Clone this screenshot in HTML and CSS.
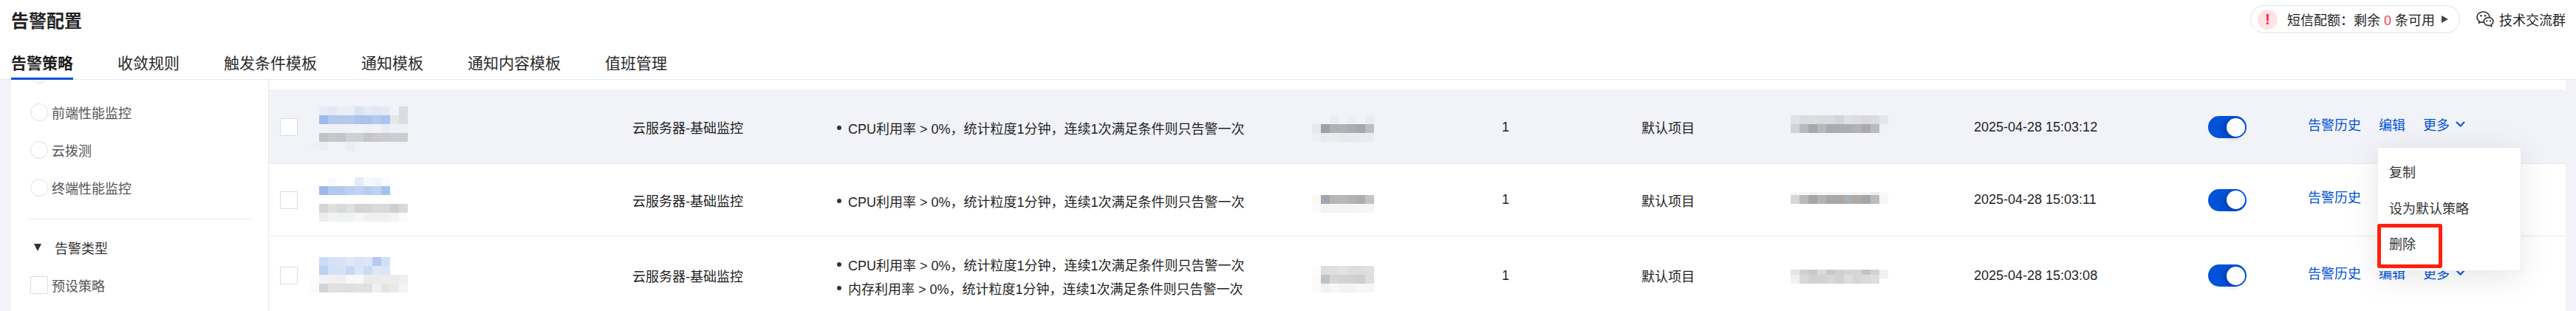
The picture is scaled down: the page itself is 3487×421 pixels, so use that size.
FILE: index.html
```html
<!DOCTYPE html>
<html lang="zh-CN">
<head>
  <meta charset="UTF-8">
  <title>告警配置</title>
  <link rel="stylesheet" href="styles.css">
</head>
<body>
  <header class="page-header">
    <div class="top-row">
      <h1>告警配置</h1>
      <div class="top-tools">
        <div class="quota-pill">
          <span class="quota-alert">!</span>
          <span>短信配额：剩余 <em>0</em> 条可用</span>
          <span class="quota-arrow"></span>
        </div>
        <a class="group-link">
          <svg class="wechat-icon" viewBox="0 0 24 22" width="24" height="22">
            <path d="M9.5 1C4.8 1 1 4.2 1 8.2c0 2.3 1.3 4.3 3.2 5.6l-.7 2.4 2.8-1.4c1 .3 2.1.5 3.2.5 4.7 0 8.5-3.2 8.5-7.1S14.2 1 9.5 1z" fill="#fff" stroke="#333" stroke-width="1.6" stroke-linejoin="round"/>
            <path d="M16.6 8.6c-3.5 0-6.4 2.5-6.4 5.5s2.9 5.5 6.4 5.5c.7 0 1.4-.1 2-.3l2.3 1.6-.5-2.6c1.6-1 2.6-2.5 2.6-4.2 0-3-2.9-5.5-6.4-5.5z" fill="#fff" stroke="#333" stroke-width="1.6" stroke-linejoin="round"/>
            <circle cx="6.4" cy="6.2" r="1.3" fill="#333"/>
            <circle cx="12" cy="6.2" r="1.3" fill="#333"/>
            <circle cx="14.2" cy="13.4" r="1.1" fill="#333"/>
            <circle cx="19" cy="13.4" r="1.1" fill="#333"/>
          </svg>
          <span>技术交流群</span>
        </a>
      </div>
    </div>
    <nav class="tabs">
      <a class="tab active">告警策略</a>
      <a class="tab">收敛规则</a>
      <a class="tab">触发条件模板</a>
      <a class="tab">通知模板</a>
      <a class="tab">通知内容模板</a>
      <a class="tab">值班管理</a>
    </nav>
  </header>

  <main class="content">
    <aside class="sidebar">
      <div class="radio-row"><span class="radio"></span></div>
      <div class="radio-row"><span class="radio"></span><span>前端性能监控</span></div>
      <div class="radio-row"><span class="radio"></span><span>云拨测</span></div>
      <div class="radio-row"><span class="radio"></span><span>终端性能监控</span></div>
      <hr class="side-divider">
      <div class="filter-title"><span class="caret"></span><span>告警类型</span></div>
      <div class="radio-row check-row"><span class="checkbox"></span><span>预设策略</span></div>
    </aside>

    <section class="table">
      <div class="table-top"></div>

      <div class="row hover">
        <div class="cell"><span class="checkbox"></span></div>
        <div class="cell">
          <svg class="mosaic">
            <g transform="translate(0,21)"><rect x="0" fill="#e6ebf6"/><rect x="12" fill="#e4e8f4"/><rect x="24" fill="#ebeef7"/><rect x="36" fill="#ebeef7"/><rect x="48" fill="#dce2f2"/><rect x="60" fill="#e6eaf6"/><rect x="72" fill="#e3e7f3"/><rect x="84" fill="#e5ebf6"/><rect x="108" fill="#dcdde2"/></g>
            <g transform="translate(0,33)"><rect x="0" fill="#9dbceb"/><rect x="12" fill="#b2c8ee"/><rect x="24" fill="#b5c8ee"/><rect x="36" fill="#b5caec"/><rect x="48" fill="#acc2ec"/><rect x="60" fill="#a8c5ec"/><rect x="72" fill="#b5c8ee"/><rect x="84" fill="#a9c4ee"/><rect x="96" fill="#e5e6ea"/><rect x="108" fill="#dbdce0"/></g>
            <g transform="translate(0,45)"><rect x="12" fill="#f0f1f6"/><rect x="24" fill="#f0f1f6"/><rect x="60" fill="#f0f1f6"/><rect x="84" fill="#ebedf6"/><rect x="96" fill="#f0f1f5"/><rect x="108" fill="#f0f1f5"/></g>
            <g transform="translate(0,57)"><rect x="0" fill="#bfc3c8"/><rect x="12" fill="#c8c8c8"/><rect x="24" fill="#c0c6cc"/><rect x="36" fill="#cfd1d5"/><rect x="48" fill="#cdd1d4"/><rect x="60" fill="#c8c6c5"/><rect x="72" fill="#c8cacc"/><rect x="84" fill="#cbcccf"/><rect x="96" fill="#cdced1"/><rect x="108" fill="#cbccce"/></g>
            <g transform="translate(0,69)"><rect x="-12" fill="#f0f1f5"/><rect x="0" fill="#ebeef4"/><rect x="36" fill="#ecedf1"/></g>
          </svg>
        </div>
        <div class="cell">云服务器-基础监控</div>
        <div class="cell rule-cell">
          <ul class="rules"><li>CPU利用率 &gt; 0%，统计粒度1分钟，连续1次满足条件则只告警一次</li></ul>
        </div>
        <div class="cell">
          <svg class="mosaic">
            <g transform="translate(0,33)"><rect x="24" fill="#ecedf2"/><rect x="48" fill="#eceef3"/><rect x="72" fill="#ebecf2"/></g>
            <g transform="translate(0,45)"><rect x="0" fill="#e8e9ec"/><rect x="12" fill="#9ea1ac"/><rect x="24" fill="#afb1b5"/><rect x="36" fill="#b0b2b8"/><rect x="48" fill="#acadb0"/><rect x="60" fill="#a7a9ac"/><rect x="72" fill="#bcbfc9"/></g>
            <g transform="translate(0,57)"><rect x="0" fill="#eeeff4"/><rect x="12" fill="#e9eaef"/><rect x="24" fill="#ebecf0"/><rect x="36" fill="#e8e9ed"/><rect x="48" fill="#e9eaef"/><rect x="60" fill="#e9ebef"/><rect x="72" fill="#eaebef"/></g>
          </svg>
        </div>
        <div class="cell">1</div>
        <div class="cell">默认项目</div>
        <div class="cell">
          <svg class="mosaic">
            <g transform="translate(0,33)"><rect x="0" fill="#e1e2e7"/><rect x="12" fill="#dadbe0"/><rect x="24" fill="#dcdde0"/><rect x="36" fill="#d9dae0"/><rect x="48" fill="#dadbe0"/><rect x="60" fill="#d3d5db"/><rect x="72" fill="#dde1e4"/><rect x="84" fill="#dddde1"/><rect x="96" fill="#d8d9df"/><rect x="108" fill="#dbdce1"/><rect x="120" fill="#e3e7ed"/></g>
            <g transform="translate(0,45)"><rect x="0" fill="#d3d4da"/><rect x="12" fill="#b8b9bc"/><rect x="24" fill="#a8a8ab"/><rect x="36" fill="#b8b9bd"/><rect x="48" fill="#aaabb0"/><rect x="60" fill="#acadb2"/><rect x="72" fill="#abaeb3"/><rect x="84" fill="#b4b2b4"/><rect x="96" fill="#a8aab0"/><rect x="108" fill="#babbbf"/><rect x="120" fill="#eff2f7"/></g>
          </svg>
        </div>
        <div class="cell">2025-04-28 15:03:12</div>
        <div class="cell"><span class="switch"><span class="knob"></span></span></div>
        <div class="cell actions">
          <a>告警历史</a><a>编辑</a>
          <a class="more">更多
            <svg viewBox="0 0 13 8" width="13" height="8"><path d="M1 1l5.5 5.5L12 1" fill="none" stroke="#0052d9" stroke-width="2"/></svg>
          </a>
        </div>
      </div>

      <div class="row row-two">
        <div class="cell"><span class="checkbox"></span></div>
        <div class="cell">
          <svg class="mosaic">
            <g transform="translate(0,18)"><rect x="12" fill="#fafbff"/><rect x="48" fill="#e4ebfa"/><rect x="60" fill="#f5f9ff"/><rect x="72" fill="#f2f4fb"/><rect x="84" fill="#fafbff"/></g>
            <g transform="translate(0,30)"><rect x="-12" fill="#fdfcff"/><rect x="0" fill="#9ab8ec"/><rect x="12" fill="#b2c9f0"/><rect x="24" fill="#b4c9f0"/><rect x="36" fill="#bccff0"/><rect x="48" fill="#c0d3f2"/><rect x="60" fill="#b9ccf0"/><rect x="72" fill="#c0d2f1"/><rect x="84" fill="#a5c3ef"/></g>
            <g transform="translate(0,54)"><rect x="0" fill="#d3d5d7"/><rect x="12" fill="#dfdfdc"/><rect x="24" fill="#d5dade"/><rect x="36" fill="#e0e1df"/><rect x="48" fill="#d2d3d5"/><rect x="60" fill="#d6d5d4"/><rect x="72" fill="#dadcdb"/><rect x="84" fill="#d9d9d9"/><rect x="96" fill="#cfcfcf"/><rect x="108" fill="#d8d9da"/></g>
            <g transform="translate(0,66)"><rect x="0" fill="#ecedef"/><rect x="12" fill="#f3f3f3"/><rect x="24" fill="#f1f2f2"/><rect x="36" fill="#f1f1f1"/><rect x="48" fill="#f7f7f7"/><rect x="60" fill="#f1f1f1"/><rect x="72" fill="#f0f0f0"/><rect x="84" fill="#f1f1f1"/><rect x="96" fill="#f3f4f3"/><rect x="108" fill="#fafbfa"/></g>
          </svg>
        </div>
        <div class="cell">云服务器-基础监控</div>
        <div class="cell rule-cell">
          <ul class="rules"><li>CPU利用率 &gt; 0%，统计粒度1分钟，连续1次满足条件则只告警一次</li></ul>
        </div>
        <div class="cell">
          <svg class="mosaic">
            <g transform="translate(0,42)"><rect x="0" fill="#fbf7f3"/><rect x="12" fill="#a2a5ab"/><rect x="24" fill="#b8b6b4"/><rect x="36" fill="#b6b8bb"/><rect x="48" fill="#b3b2b0"/><rect x="60" fill="#adaeb0"/><rect x="72" fill="#c2c3c5"/></g>
            <g transform="translate(0,54)"><rect x="0" fill="#fbfbfb"/><rect x="12" fill="#f2f3f3"/><rect x="24" fill="#f5f5f5"/><rect x="36" fill="#f3f3f3"/><rect x="48" fill="#f5f5f5"/><rect x="60" fill="#f6f6f6"/><rect x="72" fill="#f6f6f6"/></g>
          </svg>
        </div>
        <div class="cell">1</div>
        <div class="cell">默认项目</div>
        <div class="cell">
          <svg class="mosaic">
            <g class="sliver" transform="translate(0,38)"><rect x="0" fill="#f8f8f8"/><rect x="12" fill="#f6f6f6"/><rect x="24" fill="#f4f4f4"/><rect x="36" fill="#f7f7f7"/><rect x="48" fill="#f6f6f6"/><rect x="60" fill="#f6f6f6"/><rect x="72" fill="#f7f7f7"/><rect x="84" fill="#f6f6f6"/><rect x="96" fill="#f5f5f5"/><rect x="108" fill="#eeeeee"/><rect x="120" fill="#fafafa"/></g>
            <g transform="translate(0,42)"><rect x="0" fill="#d6d6d6"/><rect x="12" fill="#b9b8b6"/><rect x="24" fill="#a8a5a4"/><rect x="36" fill="#b2b5b4"/><rect x="48" fill="#a8a8a9"/><rect x="60" fill="#a8a8a8"/><rect x="72" fill="#a9afb3"/><rect x="84" fill="#b2a9a4"/><rect x="96" fill="#a4a5a8"/><rect x="108" fill="#bbbbba"/><rect x="120" fill="#f6f7f8"/></g>
          </svg>
        </div>
        <div class="cell">2025-04-28 15:03:11</div>
        <div class="cell"><span class="switch"><span class="knob"></span></span></div>
        <div class="cell actions">
          <a>告警历史</a><a>编辑</a>
          <a class="more">更多
            <svg viewBox="0 0 13 8" width="13" height="8"><path d="M1 1l5.5 5.5L12 1" fill="none" stroke="#0052d9" stroke-width="2"/></svg>
          </a>
        </div>
      </div>

      <div class="row row-three">
        <div class="cell"><span class="checkbox"></span></div>
        <div class="cell">
          <svg class="mosaic">
            <g transform="translate(0,28)"><rect x="0" fill="#ccdcf6"/><rect x="12" fill="#d5e1f7"/><rect x="24" fill="#dbe4f6"/><rect x="36" fill="#e1e6f6"/><rect x="48" fill="#d9e4f7"/><rect x="60" fill="#e0e6f7"/><rect x="72" fill="#b6caef"/><rect x="84" fill="#d0e0f8"/></g>
            <g transform="translate(0,40)"><rect x="0" fill="#bcd0f1"/><rect x="12" fill="#d3e0f5"/><rect x="24" fill="#d6e1f5"/><rect x="36" fill="#c8d7f3"/><rect x="48" fill="#dae6f8"/><rect x="60" fill="#cbdbf5"/><rect x="72" fill="#dfe8f7"/><rect x="84" fill="#dbe5f6"/></g>
            <g transform="translate(0,52)"><rect x="-12" fill="#fdfdfd"/><rect x="0" fill="#f2f2f2"/><rect x="12" fill="#f1f0ee"/><rect x="24" fill="#eeeff0"/><rect x="36" fill="#f8f8f8"/><rect x="48" fill="#f8f8f8"/><rect x="60" fill="#ecebe9"/><rect x="72" fill="#eaebec"/><rect x="84" fill="#eeedeb"/><rect x="96" fill="#ebecec"/><rect x="108" fill="#f0f0f0"/></g>
            <g transform="translate(0,64)"><rect x="-12" fill="#fffaf7"/><rect x="0" fill="#d0d4d7"/><rect x="12" fill="#e3e2df"/><rect x="24" fill="#dee1e3"/><rect x="36" fill="#dfdfdf"/><rect x="48" fill="#e0e2e3"/><rect x="60" fill="#e1e0dc"/><rect x="72" fill="#eef1f3"/><rect x="84" fill="#e6e5e3"/><rect x="96" fill="#e8e9e8"/><rect x="108" fill="#f3f4f6"/></g>
          </svg>
        </div>
        <div class="cell">云服务器-基础监控</div>
        <div class="cell rule-cell">
          <ul class="rules">
            <li>CPU利用率 &gt; 0%，统计粒度1分钟，连续1次满足条件则只告警一次</li>
            <li>内存利用率 &gt; 0%，统计粒度1分钟，连续1次满足条件则只告警一次</li>
          </ul>
        </div>
        <div class="cell">
          <svg class="mosaic">
            <g transform="translate(0,40)"><rect x="0" fill="#fdfcfb"/><rect x="12" fill="#dbdee0"/><rect x="24" fill="#dfdfdd"/><rect x="36" fill="#e3e3e3"/><rect x="48" fill="#dedddb"/><rect x="60" fill="#dddddc"/><rect x="72" fill="#dfe0e3"/></g>
            <g transform="translate(0,52)"><rect x="0" fill="#fbfaf8"/><rect x="12" fill="#bfc2c8"/><rect x="24" fill="#d7d6d4"/><rect x="36" fill="#d2d4d4"/><rect x="48" fill="#d0d1d0"/><rect x="60" fill="#cfcfcd"/><rect x="72" fill="#dcdee2"/></g>
            <g transform="translate(0,64)"><rect x="0" fill="#fbfbfb"/><rect x="12" fill="#f2f2f3"/><rect x="24" fill="#f7f7f7"/><rect x="36" fill="#f3f3f3"/><rect x="48" fill="#f3f3f3"/><rect x="60" fill="#f7f7f7"/><rect x="72" fill="#f6f6f6"/></g>
          </svg>
        </div>
        <div class="cell">1</div>
        <div class="cell">默认项目</div>
        <div class="cell">
          <svg class="mosaic">
            <g transform="translate(0,45)"><rect x="0" fill="#e4e4e4"/><rect x="12" fill="#d2d1ce"/><rect x="24" fill="#cac8c5"/><rect x="36" fill="#d8dadc"/><rect x="48" fill="#cbc8c7"/><rect x="60" fill="#d2d1d1"/><rect x="72" fill="#d3d5d8"/><rect x="84" fill="#dbd6d4"/><rect x="96" fill="#c3c4c8"/><rect x="108" fill="#d4d2ce"/><rect x="120" fill="#f1f1f2"/></g>
            <g transform="translate(0,52)"><rect x="0" fill="#f0f0ef"/><rect x="12" fill="#d8d8d8"/><rect x="24" fill="#d2d1cf"/><rect x="36" fill="#d2d2d2"/><rect x="48" fill="#d5d7d9"/><rect x="60" fill="#cfd2d1"/><rect x="72" fill="#dcdfdf"/><rect x="84" fill="#d8d5d3"/><rect x="96" fill="#d9dadc"/><rect x="108" fill="#dcdfde"/></g>
          </svg>
        </div>
        <div class="cell">2025-04-28 15:03:08</div>
        <div class="cell"><span class="switch"><span class="knob"></span></span></div>
        <div class="cell actions">
          <a>告警历史</a><a>编辑</a>
          <a class="more">更多
            <svg viewBox="0 0 13 8" width="13" height="8"><path d="M1 1l5.5 5.5L12 1" fill="none" stroke="#0052d9" stroke-width="2"/></svg>
          </a>
        </div>
      </div>

      <div class="dropdown">
        <a class="dropdown-item">复制</a>
        <a class="dropdown-item">设为默认策略</a>
        <a class="dropdown-item">删除</a>
        <span class="mark-box"></span>
      </div>
    </section>
  </main>
</body>
</html>
```

FILE: styles.css
```css
* {
  box-sizing: border-box;
}

body {
  margin: 0;
  width: 3487px;
  height: 421px;
  overflow: hidden;
  background-color: #f2f3f8;
  color: #1f1f1f;
  font-family: "Liberation Sans", "Noto Sans CJK SC", sans-serif;
  font-size: 18px;
}

/* header */
.page-header {
  height: 108px;
  padding: 7px 14px 0 15px;
  background-color: white;
  border-bottom: 1px solid #e7eaef;
}

.top-row {
  display: flex;
  justify-content: space-between;
  align-items: center;
  height: 38px;
}

h1 {
  margin: 0;
  font-size: 24px;
  font-weight: bold;
  color: #222;
}

.top-tools {
  display: flex;
  align-items: center;
  gap: 22px;
}

.quota-pill {
  display: flex;
  align-items: center;
  width: 284px;
  height: 38px;
  padding: 0 0 0 9px;
  border: 1px solid #dde2f0;
  border-radius: 19px;
}

.quota-pill em {
  font-style: normal;
  color: #f5404f;
}

.quota-alert {
  display: flex;
  justify-content: center;
  align-items: center;
  width: 27px;
  height: 27px;
  margin-right: 13px;
  border-radius: 50%;
  background-color: #ffe3e6;
  color: #f5323f;
  font-size: 21px;
  font-weight: bold;
}

.quota-arrow {
  width: 0;
  height: 0;
  margin-left: 9px;
  border-left: 9px solid #444;
  border-top: 5.5px solid transparent;
  border-bottom: 5.5px solid transparent;
}

.group-link {
  display: flex;
  align-items: center;
  gap: 7px;
}

.tabs {
  display: flex;
  gap: 60px;
  margin-top: 20px;
}

.tab {
  height: 43px;
  line-height: 42px;
  font-size: 21px;
  color: #2a2a2a;
}

.tab.active {
  font-weight: bold;
  color: #1c1c1c;
  border-bottom: 3px solid #0052d9;
}

/* sidebar + table */
.content {
  display: flex;
  height: 313px;
  margin-left: 15px;
  margin-right: 14px;
}

.sidebar {
  flex: none;
  width: 349px;
  padding-left: 26px;
  overflow: hidden;
  background-color: white;
  border-right: 1px solid #e7eaef;
  color: #555;
}

.radio-row {
  display: flex;
  align-items: center;
  gap: 5px;
  height: 51px;
}

.radio-row:first-child {
  margin-top: -33px;
}

.radio {
  width: 24px;
  height: 24px;
  background-color: white;
  border: 1px solid #dcdfe8;
  border-radius: 50%;
}

.checkbox {
  display: block;
  flex: none;
  width: 24px;
  height: 24px;
  background-color: white;
  border: 1px solid #d8dce8;
  border-radius: 1px;
}

.side-divider {
  width: 300px;
  height: 1px;
  margin: 17px 0 0 -2px;
  border: none;
  background-color: #e7e8f0;
}

.filter-title {
  display: flex;
  align-items: center;
  height: 40px;
  margin-top: 18px;
  padding-left: 5px;
  color: #333;
}

.caret {
  width: 0;
  height: 0;
  margin-right: 18px;
  border-top: 10px solid #333;
  border-left: 5.5px solid transparent;
  border-right: 5.5px solid transparent;
}

.check-row {
  height: 40px;
  margin-top: 11px;
}

.table {
  position: relative;
  flex: 1;
  background-color: white;
}

.table-top {
  height: 15px;
  border-bottom: 1px solid #e7eaef;
}

.row {
  display: grid;
  grid-template-columns: 68px 424px 277px 643px 257px 189px 202px 248px 317px 135px 349px;
  grid-auto-rows: 100%;
  height: 99px;
  border-bottom: 1px solid #e7eaef;
}

.row.hover {
  background-color: #f2f3f8;
}

.row.row-two {
  height: 98px;
}

.row.row-three {
  height: 106px;
  border-bottom: none;
}

.cell {
  display: flex;
  align-items: center;
  min-height: 0;
  white-space: nowrap;
}

.cell:first-child {
  padding-left: 15px;
}

.rule-cell {
  padding-top: 2px;
}

.rules {
  margin: 0;
  padding: 0;
  list-style: none;
}

.rules li {
  display: flex;
  align-items: center;
  gap: 9px;
  height: 32px;
}

.rules li::before {
  content: "";
  width: 6px;
  height: 6px;
  border-radius: 50%;
  background-color: #333;
}

.mosaic {
  display: block;
  width: 100%;
  height: 100%;
  overflow: visible;
}

.mosaic rect {
  width: 12px;
  height: 12px;
}

.mosaic .sliver rect {
  height: 4px;
}

.switch {
  display: flex;
  justify-content: flex-end;
  align-items: center;
  width: 52px;
  height: 30px;
  padding-right: 2px;
  border-radius: 15px;
  background-color: #0052d9;
}

.knob {
  width: 25px;
  height: 25px;
  border-radius: 50%;
  background-color: white;
  box-shadow: -4px 2px 6px rgba(0, 20, 80, 0.3);
}

.actions {
  gap: 24px;
  padding-bottom: 9px;
  color: #0052d9;
}

.more {
  display: flex;
  align-items: center;
  gap: 8px;
}

.dropdown {
  position: absolute;
  top: 91px;
  left: 2854px;
  z-index: 2;
  width: 195px;
  height: 168px;
  padding-top: 10px;
  background-color: white;
  border: 1px solid #e7eaef;
  box-shadow: 0 8px 40px rgba(0, 0, 0, 0.1);
  color: #333;
}

.dropdown-item {
  display: block;
  height: 48.5px;
  padding-left: 15px;
  line-height: 48.5px;
}

.mark-box {
  position: absolute;
  top: 103px;
  left: -1px;
  width: 88px;
  height: 60px;
  border: 5px solid #ff2010;
  border-radius: 3px;
}
```
